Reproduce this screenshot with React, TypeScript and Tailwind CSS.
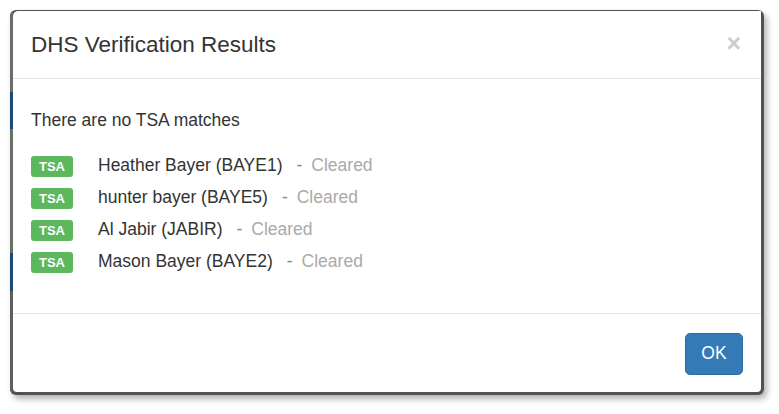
import React from 'react'

const results = [
  { name: 'Heather Bayer (BAYE1)', status: 'Cleared' },
  { name: 'hunter bayer (BAYE5)', status: 'Cleared' },
  { name: 'Al Jabir (JABIR)', status: 'Cleared' },
  { name: 'Mason Bayer (BAYE2)', status: 'Cleared' },
]

const App = () => {
  return (
    <div className="w-[779px] h-[414px] bg-white overflow-hidden pl-[10px] pt-[10px]" style={{ fontFamily: '"Liberation Sans", Arial, sans-serif' }}>
      {/* screenshot frame with backdrop peeking on the left */}
      <div className="w-[754px] h-[385px] flex bg-[#4f544f] rounded-[6px] pt-[1px] pr-[3px] pb-[3px] shadow-[3px_4px_6px_rgba(0,0,0,0.3)] overflow-hidden">
        <div className="w-[3px] flex flex-col shrink-0">
          <div className="h-[81px] bg-[#6a6d6a]" />
          <div className="h-[37px] bg-[#1f4a78]" />
          <div className="h-[124px] bg-[#6a6d6a]" />
          <div className="h-[38px] bg-[#1f4a78]" />
          <div className="flex-1 bg-[#5c605c]" />
        </div>

        <div className="flex-1 bg-white rounded-tl-[5px] rounded-bl-[4px] rounded-br-[4px] flex flex-col text-[#333]">
          {/* Header */}
          <div className="flex justify-between items-start px-[18px] py-[18px] border-b border-[#e5e5e5]">
            <h4 className="text-[22.5px] leading-[31px] text-[#333]">DHS Verification Results</h4>
            <button className="text-[25px] font-bold leading-none text-black opacity-20 mt-[2px] mr-[2px]">×</button>
          </div>

          {/* Body */}
          <div className="px-[18px] pt-[29px] pb-[36px] text-[17.5px] leading-[24px]">
            <p className="mb-[16.6px]">There are no TSA matches</p>
            {results.map((r) => (
              <div key={r.name} className="flex items-center h-[32px]">
                <span className="mt-[4px] w-[42px] h-[21px] rounded-[3px] bg-[#5cb85c] text-white font-bold text-[13px] leading-[21px] text-center shrink-0">
                  TSA
                </span>
                <span className="ml-[25px]">{r.name}</span>
                <span className="ml-[14px] text-[#888]">-</span>
                <span className="ml-[9px] text-[#aaa]">{r.status}</span>
              </div>
            ))}
          </div>

          {/* Footer */}
          <div className="flex-1 flex justify-end items-start border-t border-[#e5e5e5] pt-[19px] pr-[18px]">
            <button className="w-[58px] h-[42px] rounded-[5px] bg-[#337ab7] border border-[#2e6da4] text-white text-[17.5px]">
              OK
            </button>
          </div>
        </div>
      </div>
    </div>
  )
}

export default App
